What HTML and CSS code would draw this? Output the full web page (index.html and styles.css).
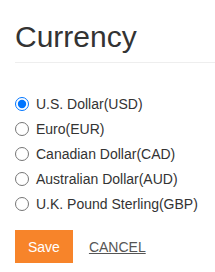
FILE: index.html
```html
<!DOCTYPE html>
<html lang="en">
<head>
    <meta charset="UTF-8">
    <meta name="viewport" content="width=device-width, initial-scale=1.0">
    <title>Currency</title>
    <link rel="stylesheet" href="styles.css">
</head>
<body>
    <div class="container">
        <div class="page-header">
            <h1>Currency</h1>
        </div>

        <form class="currency-form">
            <div class="options">
                <label class="option"><input type="radio" name="currency" value="USD" checked> U.S. Dollar(USD)</label>
                <label class="option"><input type="radio" name="currency" value="EUR"> Euro(EUR)</label>
                <label class="option"><input type="radio" name="currency" value="CAD"> Canadian Dollar(CAD)</label>
                <label class="option"><input type="radio" name="currency" value="AUD"> Australian Dollar(AUD)</label>
                <label class="option"><input type="radio" name="currency" value="GBP"> U.K. Pound Sterling(GBP)</label>
            </div>
            <div class="actions">
                <button type="submit" class="btn-save">Save</button>
                <a href="#" class="cancel-link">CANCEL</a>
            </div>
        </form>
    </div>
</body>
</html>
```

FILE: styles.css
```css
* {
    box-sizing: border-box;
}

body {
    font-family: "Liberation Sans", Arial, sans-serif;
    font-size: 14px;
    color: #333;
    margin: 0;
    padding: 0;
}

.container {
    padding-left: 15px;
}

.page-header {
    margin: 20px 0 28px;
    padding-bottom: 9px;
    border-bottom: 1px solid #eee;
}

.page-header h1 {
    margin: 0;
    font-size: 30px;
    font-weight: 400;
    line-height: 33px;
}

.options {
    display: flex;
    flex-direction: column;
}

.option {
    display: flex;
    align-items: center;
    height: 25px;
    gap: 7px;
    cursor: pointer;
}

.option input {
    margin: 0;
    width: 14px;
    height: 14px;
}

.actions {
    display: flex;
    align-items: center;
    gap: 16px;
    margin-top: 14px;
}

.btn-save {
    height: 33px;
    padding: 0 13px;
    border: none;
    background-color: #f7842a;
    color: #fff;
    font-family: inherit;
    font-size: 14px;
    cursor: pointer;
}

.cancel-link {
    color: #555;
    font-size: 14px;
}
```
